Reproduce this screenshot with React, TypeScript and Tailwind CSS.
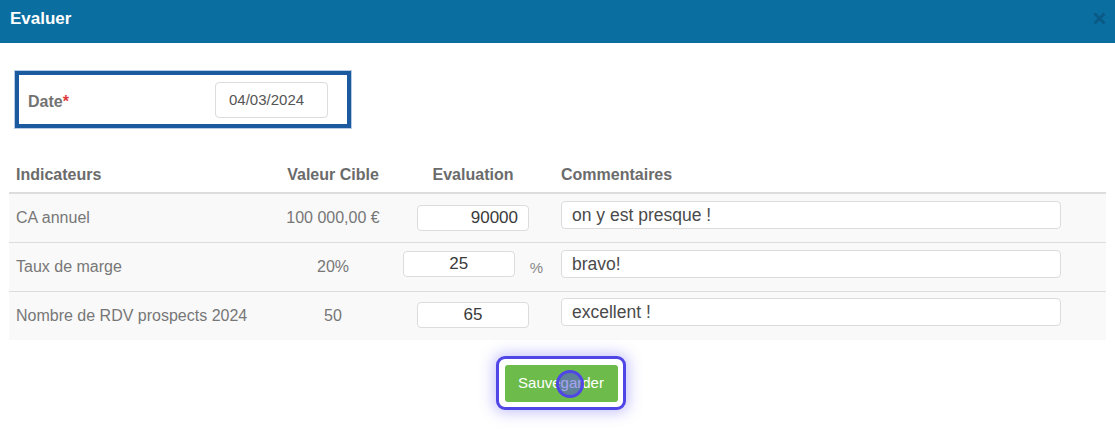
import React from "react";

type Row = {
  label: string;
  target: string;
  value: string;
  align: "right" | "center";
  unit?: string;
  comment: string;
  evalTop: string;
  commentTop: string;
};

const rows: Row[] = [
  { label: "CA annuel", target: "100 000,00 €", value: "90000", align: "right", comment: "on y est presque !", evalTop: "mt-[11px]", commentTop: "mt-[7px]" },
  { label: "Taux de marge", target: "20%", value: "25", align: "center", unit: "%", comment: "bravo!", evalTop: "mt-[6px]", commentTop: "mt-[7px]" },
  { label: "Nombre de RDV prospects 2024", target: "50", value: "65", align: "center", comment: "excellent !", evalTop: "mt-[10px]", commentTop: "mt-[6px]" },
];

function CloseIcon() {
  return (
    <svg width="13" height="13" viewBox="0 0 13 13" aria-hidden className="mt-[12px]">
      <path d="M1.5 1.5 L11.5 11.5 M11.5 1.5 L1.5 11.5" stroke="#0a5a86" strokeWidth="3" />
    </svg>
  );
}

export default function App() {
  return (
    <div className="relative h-[429px] w-[1115px] overflow-hidden bg-white font-['Liberation_Sans',Arial,sans-serif]">
      <div className="flex h-[43px] items-start justify-between bg-[#0a6ea0] pl-[10px] pr-[9px]">
        <span className="pt-[9px] text-[17px] font-bold leading-[20px] text-white">Evaluer</span>
        <CloseIcon />
      </div>

      <div className="px-[9px]">
        <div className="ml-[6px] mt-[28px] flex h-[57px] w-[336px] items-center justify-between border-4 border-[#1b5a9e] pl-[9px] pr-[19px] ring-1 ring-[#b7cce4]">
          <span className="translate-y-[2px] text-[16px] font-bold text-[#737373]">
            Date<span className="text-[#e03b3b]">*</span>
          </span>
          <div className="flex h-[36px] w-[113px] items-center rounded-[4px] border border-[#dcdcdc] pl-[13px] pt-[2px] text-[15px] text-[#555]">
            04/03/2024
          </div>
        </div>

        <div className="mt-[29px]">
          <div className="flex h-[37px] items-center border-b-2 border-[#dddddd] text-[16px] font-bold text-[#6b6b6b]">
            <div className="w-[251px] pl-[7px]">Indicateurs</div>
            <div className="w-[146px] text-center">Valeur Cible</div>
            <div className="w-[134px] text-center">Evaluation</div>
            <div className="flex-1 pl-[21px]">Commentaires</div>
          </div>

          {rows.map((r, i) => (
            <div
              key={r.label}
              className={"flex bg-[#f9f9f9] text-[16px] text-[#777] " + (i < rows.length - 1 ? "h-[49px] border-b border-[#dddddd]" : "h-[48px]")}
            >
              <div className="flex w-[251px] items-center pl-[7px]">{r.label}</div>
              <div className="flex w-[146px] items-center justify-center">{r.target}</div>
              <div className="flex w-[134px] items-start justify-center">
                <div className={"flex items-center gap-[15px] " + r.evalTop}>
                  <input
                    readOnly
                    value={r.value}
                    className={
                      "h-[26px] w-[112px] rounded-[4px] border border-[#dcdcdc] bg-white text-[17px] text-[#3a3a3a] outline-none " +
                      (r.align === "right" ? "pr-[10px] text-right" : "text-center")
                    }
                  />
                  {r.unit && <span className="mt-[8px] text-[15px] text-[#888]">{r.unit}</span>}
                </div>
              </div>
              <div className="flex-1 pl-[21px]">
                <input
                  readOnly
                  value={r.comment}
                  className={"h-[28px] w-[500px] rounded-[4px] border border-[#dcdcdc] bg-white pl-[10px] text-[17.5px] text-[#4a4a4a] outline-none " + r.commentTop}
                />
              </div>
            </div>
          ))}
        </div>

        <div className="mt-[16px] flex justify-center pl-[7px]">
          <div className="flex h-[54px] w-[130px] items-center justify-center rounded-[9px] border-[3px] border-[#4f46e5] bg-white shadow-[0_0_14px_3px_rgba(99,91,240,0.35)]">
            <button type="button" className="relative h-[37px] w-[113px] rounded-[3px] bg-[#6cbb4b] text-[15px] text-white">
              Sauvegarder
              <span className="absolute left-[51px] top-[5px] h-[28px] w-[28px] rounded-full border-[3px] border-[#4f46e5] bg-[#4f46e5]/50" />
            </button>
          </div>
        </div>
      </div>
    </div>
  );
}
